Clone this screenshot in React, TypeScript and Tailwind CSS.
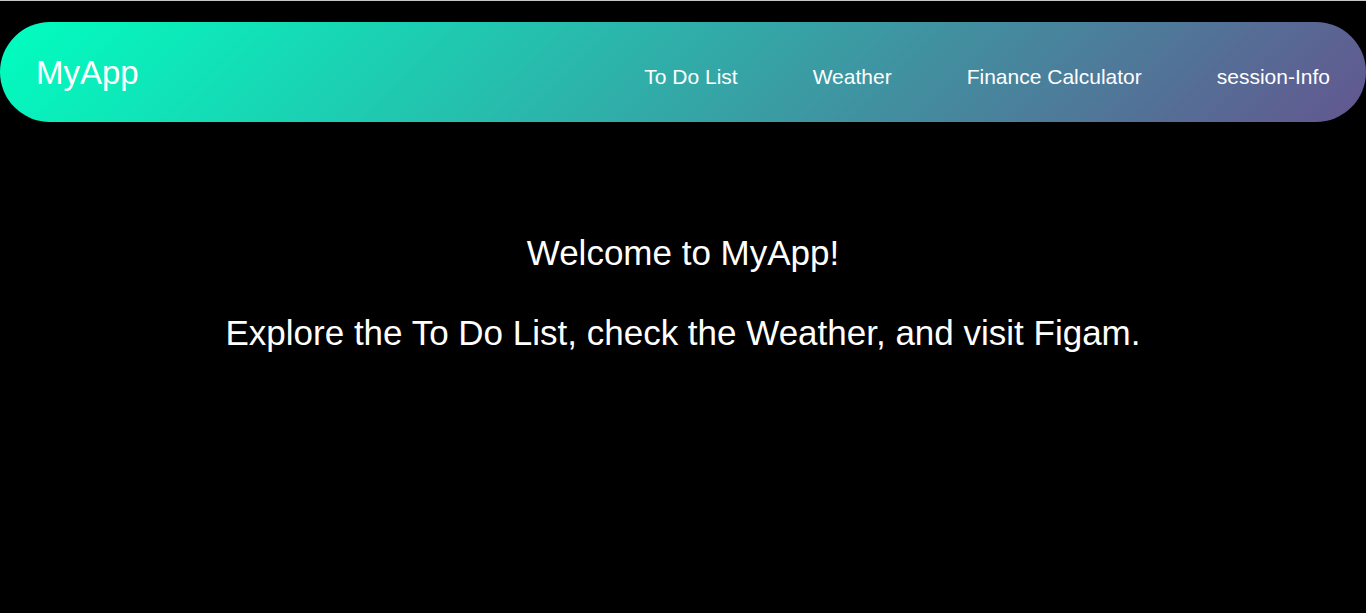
const links = ["To Do List", "Weather", "Finance Calculator", "session-Info"];

export default function App() {
  return (
    <div className="min-h-[613px] bg-black border-t border-[#c6c6c6] font-['Liberation_Sans',Arial,sans-serif] text-white">
      <nav className="mt-[21px] h-[100px] rounded-[50px] bg-[linear-gradient(135deg,#00ffc0,#63568f)] flex items-center justify-between px-[36px]">
        <span className="text-[33px] leading-none">MyApp</span>
        <ul className="flex items-center gap-[75px] pt-[9px]">
          {links.map((l) => (
            <li key={l}>
              <a href="#" className="text-[21px]">
                {l}
              </a>
            </li>
          ))}
        </ul>
      </nav>
      <main className="flex flex-col items-center pt-[111px] gap-[40px] text-[35px] leading-[40px]">
        <h1>Welcome to MyApp!</h1>
        <p>Explore the To Do List, check the Weather, and visit Figam.</p>
      </main>
    </div>
  );
}
